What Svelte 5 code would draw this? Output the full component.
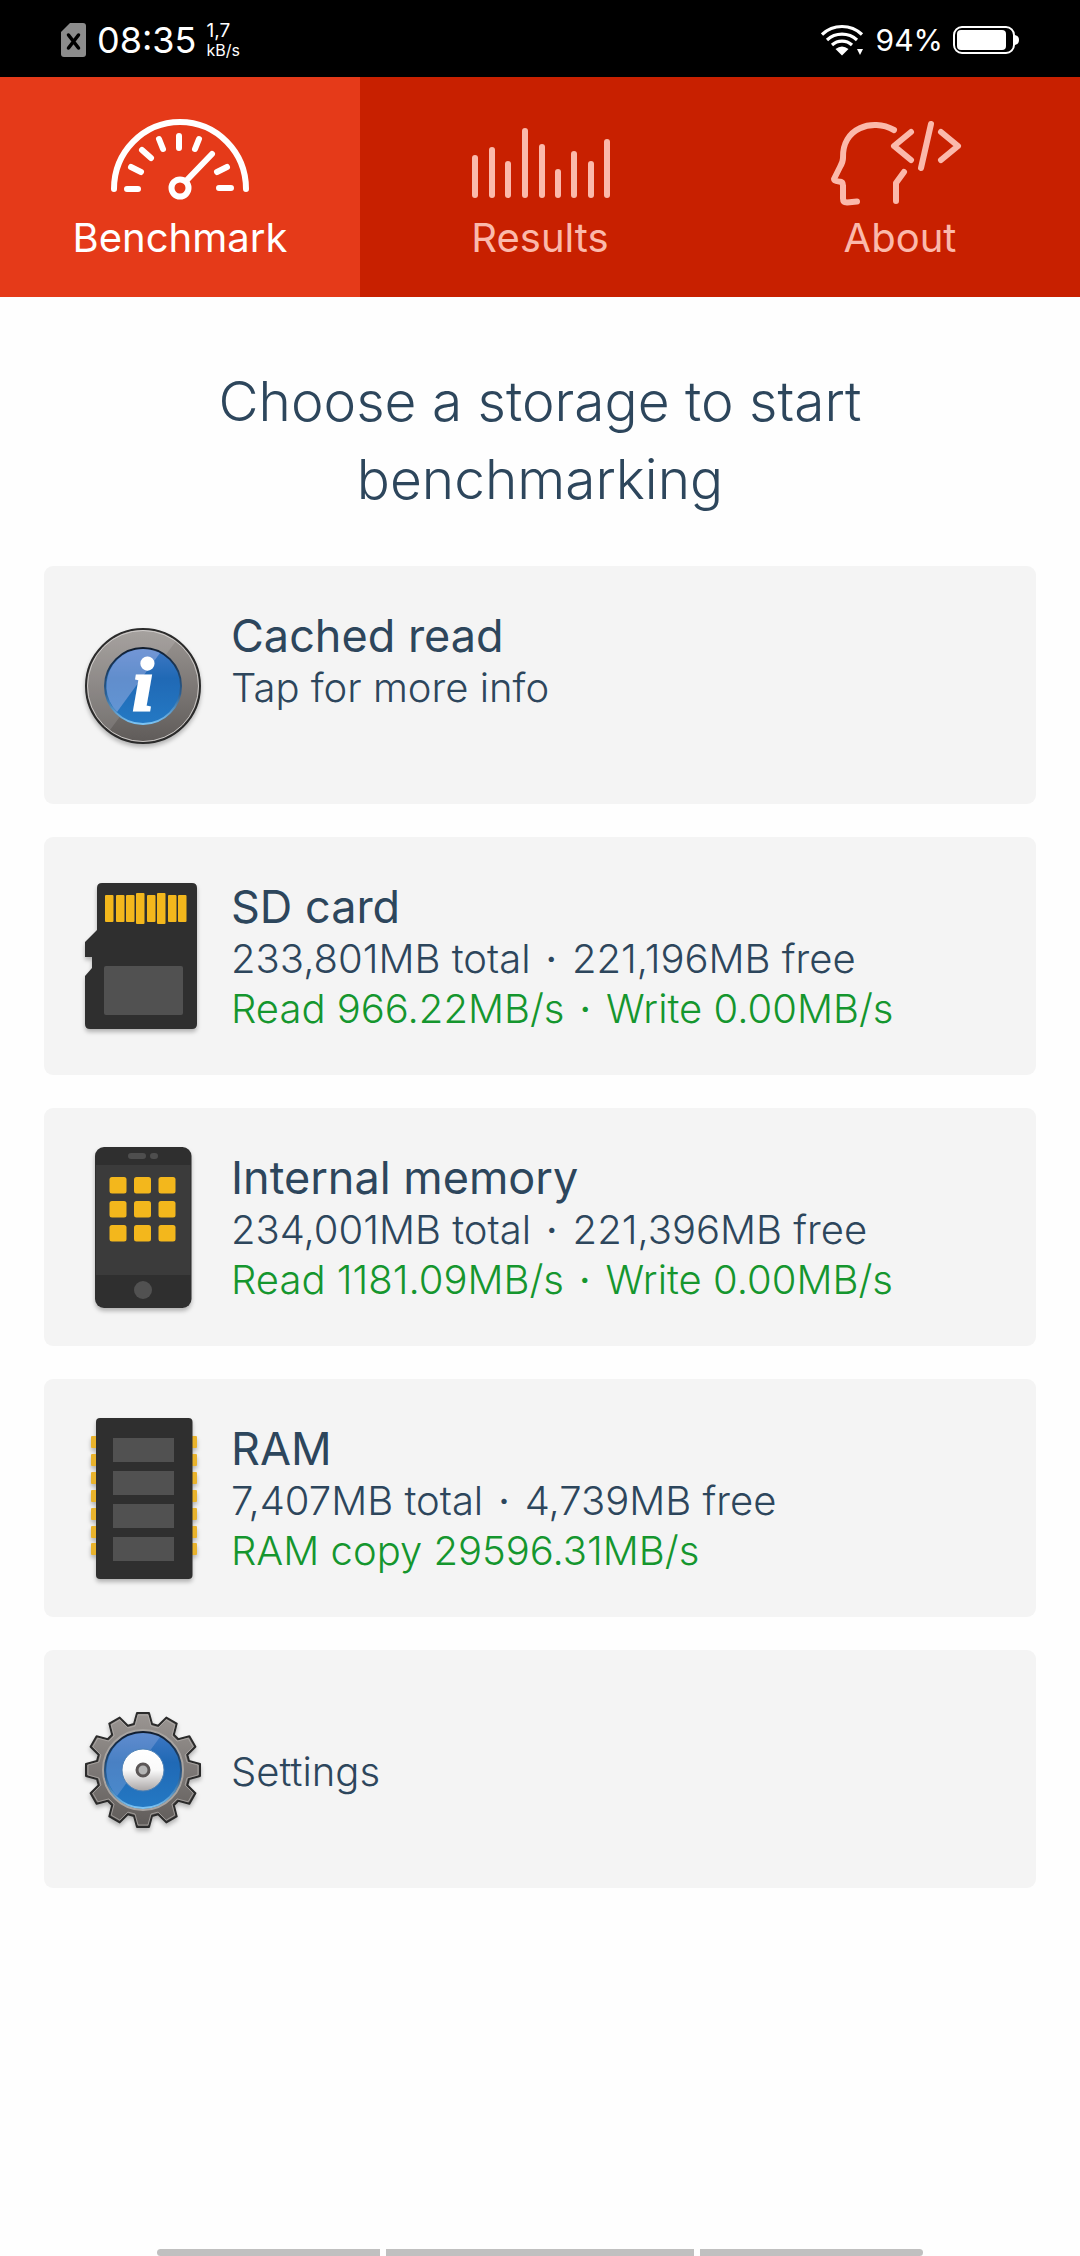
<script>
  let tab = $state('benchmark');

  const tabs = [
    { id: 'benchmark', label: 'Benchmark' },
    { id: 'results', label: 'Results' },
    { id: 'about', label: 'About' },
  ];

  const storages = [
    { icon: 'info', title: 'Cached read', usage: ['Tap for more info'], speed: [] },
    { icon: 'sd', title: 'SD card', usage: ['233,801MB total', '221,196MB free'], speed: ['Read 966.22MB/s', 'Write 0.00MB/s'] },
    { icon: 'phone', title: 'Internal memory', usage: ['234,001MB total', '221,396MB free'], speed: ['Read 1181.09MB/s', 'Write 0.00MB/s'] },
    { icon: 'ram', title: 'RAM', usage: ['7,407MB total', '4,739MB free'], speed: ['RAM copy 29596.31MB/s'] },
    { icon: 'gear', title: '', usage: ['Settings'], speed: [] },
  ];

  // x position and top of each bar in the results icon
  const bars = [[7, 44], [24, 36], [40, 50], [57, 17], [74, 33], [90, 58], [106, 40], [123, 50], [139, 28]];

  // SD card contacts: x, taller or not
  const contacts = [[31, 0], [42, 0], [52, 0], [62, 1], [73, 0], [83, 1], [94, 0], [104, 0]];

  // outline of the 12-tooth gear around 69,83
  function gearPath(tip, root, half) {
    const pts = [];
    for (let i = 0; i < 12; i++) {
      const a = (i * Math.PI) / 6;
      for (const [r, w] of [[root, -half - 3], [tip, -half], [tip, half], [root, half + 3]]) {
        const x = 69 + r * Math.sin(a) + w * Math.cos(a);
        const y = 83 - r * Math.cos(a) + w * Math.sin(a);
        pts.push(x.toFixed(1) + ' ' + y.toFixed(1));
      }
    }
    return 'M' + pts.join('L') + 'Z';
  }
  const gear = gearPath(57, 46, 6);
  const gearEdge = gearPath(55, 44, 5);
</script>

{#snippet parts(list)}
  {#each list as part, i}
    {#if i > 0}<span class="dot">·</span>{/if}<span>{part}</span>
  {/each}
{/snippet}

{#snippet tabIcon(id)}
  <svg class="tab-icon" viewBox="0 0 144 90" aria-hidden="true">
    {#if id === 'benchmark'}
      <path d="M6 75a66 67 0 0 1 132 0" />
      <path d="M19 75h11M23 53l10 5M34 36l9 8M51 25l4 10M71 22v12M91 25l-4 10M119 53l-10 5M111 74h12" />
      <path d="M104 40L78 67" />
      <circle cx="72" cy="74" r="8.5" />
    {:else if id === 'results'}
      {#each bars as [x, y]}
        <path d="M{x} {y}V81" />
      {/each}
    {:else}
      <path d="M66 16C44 4 14 14 15 44q0 4-3 9l-6 12q0 2 5 2.500q4 0 4 4v13q0 4 4 4l10-1" />
      <path d="M76 58l-8 11v18M83 18L66 32l17 14M103 10l-10 44M113 18l17 14-17 14" />
    {/if}
  </svg>
{/snippet}

{#snippet cardIcon(id)}
  <svg class="card-icon" viewBox="0 0 138 164" aria-hidden="true">
    {#if id === 'info'}
      <circle cx="69" cy="83" r="57" fill="url(#metal)" stroke="#2b2b2b" stroke-width="2" />
      <circle cx="69" cy="83" r="55.500" fill="none" stroke="#c9c6c4" stroke-width="1" />
      <path d="M102 38A55 55 0 0 0 36 127Z" fill="#fff" opacity=".12" />
      <circle cx="69" cy="83" r="38" fill="url(#blue)" stroke="url(#rim)" stroke-width="2" />
      <path d="M86 50A37 37 0 0 0 43 109Z" fill="#c3c6ef" opacity=".4" />
      <text x="69" y="107" text-anchor="middle" class="info-i">i</text>
    {:else if id === 'sd'}
      <path d="M28 9h90q5 0 5 5v136q0 5-5 5H16q-5 0-5-5V102l7-8V83h-7V68l12-12V14q0-5 5-5z" fill="#2f2f2f" />
      {#each contacts as [x, tall]}
        <rect {x} y={tall ? 19 : 21} width="8.500" height={tall ? 31 : 27} rx="1" fill="#f3b71c" />
      {/each}
      <rect x="30" y="92" width="79" height="49" rx="2" fill="#515151" />
    {:else if id === 'phone'}
      <rect x="21" y="2" width="96.500" height="161" rx="9" fill="#2f2f2f" />
      <rect x="22" y="20" width="94.500" height="110" fill="#3b3b3b" />
      <rect x="54" y="8" width="18" height="6" rx="3" fill="#4e4e4e" />
      <rect x="76" y="8" width="8" height="6" rx="3" fill="#4e4e4e" />
      {#each [32, 56, 80] as y}
        {#each [35.500, 60, 84.500] as x}
          <rect {x} {y} width="17" height="16.500" rx="2.500" fill="#f3b71c" />
        {/each}
      {/each}
      <circle cx="69" cy="145" r="9" fill="#515151" />
    {:else if id === 'ram'}
      {#each [20, 38, 56, 74, 92, 110, 127] as y}
        <rect x="17" {y} width="106" height="12" rx="1" fill="#e9b32c" />
      {/each}
      <rect x="22" y="2" width="96.500" height="161" rx="4" fill="#2f2f2f" />
      {#each [22, 55, 88, 121] as y}
        <rect x="39" {y} width="61" height="24" fill="#515151" />
      {/each}
    {:else}
      <path d={gear} fill="url(#metal)" stroke="#2b2b2b" stroke-width="2" stroke-linejoin="round" />
      <path d={gearEdge} fill="none" stroke="#b5b1ae" stroke-width="1" opacity=".7" />
      <circle cx="69" cy="83" r="40" fill="none" stroke="#a8a4a1" stroke-width="2" />
      <circle cx="69" cy="83" r="38" fill="url(#blue)" stroke="url(#rim)" stroke-width="2" />
      <path d="M86 50A37 37 0 0 0 43 109Z" fill="#c3c6ef" opacity=".25" />
      <circle cx="69" cy="83" r="21" fill="url(#disc)" stroke="#4a7fb5" stroke-width="1" />
      <circle cx="69" cy="83" r="6" fill="#b5b5b5" stroke="#5b5656" stroke-width="3" />
    {/if}
  </svg>
{/snippet}

<div class="screen">
  <!-- shared gradients for the glossy icons -->
  <svg class="defs" aria-hidden="true">
    <defs>
      <linearGradient id="metal" x1="0" y1="0" x2="0" y2="1">
        <stop offset="0" stop-color="#9b9693" />
        <stop offset="1" stop-color="#5f5b59" />
      </linearGradient>
      <linearGradient id="blue" x1="0" y1="0" x2="0" y2="1">
        <stop offset="0" stop-color="#3f78c4" />
        <stop offset=".4" stop-color="#2069b5" />
        <stop offset="1" stop-color="#2479c4" />
      </linearGradient>
      <linearGradient id="rim" x1="0" y1="0" x2="0" y2="1">
        <stop offset="0" stop-color="#101c2e" />
        <stop offset=".6" stop-color="#2c5f92" />
        <stop offset="1" stop-color="#7cc4f4" />
      </linearGradient>
      <linearGradient id="disc" x1="0" y1="0" x2="0" y2="1">
        <stop offset="0" stop-color="#ffffff" />
        <stop offset=".5" stop-color="#fafafa" />
        <stop offset="1" stop-color="#aaa6a6" />
      </linearGradient>
    </defs>
  </svg>

  <header class="status">
    <svg class="sim" viewBox="0 0 25 34" aria-hidden="true">
      <path d="M9 0h13q3 0 3 3v28q0 3-3 3H3q-3 0-3-3V9z" fill="#8c8c8c" />
      <path d="M7.500 12l10 13M17.500 12l-10 13" stroke="#000" stroke-width="3.500" stroke-linecap="round" />
    </svg>
    <span class="clock">08:35</span>
    <span class="net"><span>1,7</span><small>kB/s</small></span>
    <span class="spacer"></span>
    <svg class="wifi" viewBox="0 0 43 32" aria-hidden="true">
      <g fill="none" stroke="#fff" stroke-width="3.200">
        <path d="M1 10.500a29 29 0 0 1 40 0" />
        <path d="M6 16a22 22 0 0 1 30 0" />
        <path d="M11 21a15 15 0 0 1 20 0" />
      </g>
      <path d="M14.500 25q6.500-5 13 0L21 31.500z" fill="#fff" />
      <path d="M36 25h6l-3 6z" fill="#fff" />
    </svg>
    <span class="percent">94%</span>
    <svg class="battery" viewBox="0 0 66 28" aria-hidden="true">
      <rect x="1" y="1" width="60" height="26" rx="8" fill="none" stroke="#fff" stroke-width="2" />
      <rect x="4" y="4" width="49" height="20" rx="4" fill="#fff" />
      <path d="M62 9q4 1 4 5t-4 5z" fill="#fff" />
    </svg>
  </header>

  <nav class="tabs">
    {#each tabs as t}
      <button class="tab" class:active={tab === t.id} onclick={() => (tab = t.id)}>
        {@render tabIcon(t.id)}
        <span>{t.label}</span>
      </button>
    {/each}
  </nav>

  <main>
    <h1>Choose a storage to start benchmarking</h1>
    <div class="cards">
      {#each storages as s}
        <button class="card">
          {@render cardIcon(s.icon)}
          <span class="info" class:single={!s.title}>
            {#if s.title}<span class="title">{s.title}</span>{/if}
            <span class="line">{@render parts(s.usage)}</span>
            {#if s.speed.length}
              <span class="line speed">{@render parts(s.speed)}</span>
            {/if}
          </span>
        </button>
      {/each}
    </div>
  </main>

  <footer class="gestures">
    <span></span>
    <span class="wide"></span>
    <span></span>
  </footer>
</div>

<style>
  :global(body) { margin: 0; background: #fefefe; }
  .screen { min-height: 100vh; display: flex; flex-direction: column; font-family: Inter, Roboto, sans-serif; color: #2d465c; }
  .defs { position: absolute; width: 0; height: 0; }
  button { font: inherit; color: inherit; border: 0; margin: 0; cursor: pointer; }

  .status { box-sizing: border-box; height: 77px; padding: 2px 61px 0; background: #000; color: #fff; display: flex; align-items: center; }
  .sim { width: 25px; height: 34px; margin-right: 11px; }
  .clock { font-size: 36px; line-height: 44px; }
  .net { display: flex; flex-direction: column; margin-left: 10px; font-size: 19px; line-height: 20px; }
  .net small { font-size: 16px; line-height: 18px; }
  .spacer { flex: 1; }
  .wifi { width: 43px; height: 32px; margin-right: 12px; }
  .percent { font-size: 30px; line-height: 36px; margin-right: 10px; }
  .battery { width: 66px; height: 28px; }

  .tabs { display: grid; grid-template-columns: repeat(3, 1fr); background: #c82000; }
  .tab { display: flex; flex-direction: column; align-items: center; gap: 10px; padding: 37px 0 35px; background: none; color: #fbb9ab; font-size: 40px; line-height: 48px; }
  .tab.active { background: #e53a19; color: #fff; }
  .tab-icon { width: 144px; height: 90px; overflow: visible; fill: none; stroke: currentColor; stroke-width: 6; stroke-linecap: round; stroke-linejoin: round; }

  main { padding: 65px 44px 48px; }
  h1 { margin: 0 0 48px; padding: 0 100px; text-align: center; font-size: 55px; line-height: 78px; font-weight: 300; }
  .cards { display: flex; flex-direction: column; gap: 33px; }
  .card { display: flex; align-items: center; gap: 19px; padding: 37px 30px; border-radius: 9px; background: #f4f4f4; text-align: left; }
  .card-icon { flex: none; width: 138px; height: 164px; filter: drop-shadow(0 3px 2px #0004); }
  .info-i { font: italic bold 74px "Liberation Serif", serif; fill: #fff; stroke: #fff; stroke-width: 3; }
  .info { display: flex; flex-direction: column; min-height: 154px; padding-top: 2px; font-size: 40px; line-height: 50px; font-weight: 300; }
  .info.single { justify-content: center; padding-top: 6px; }
  .title { font-size: 45px; line-height: 54px; font-weight: 400; }
  .speed { color: #15962e; }
  .dot { margin: 0 15px; font-weight: 400; }

  .gestures { margin-top: auto; width: 71%; align-self: center; display: flex; gap: 6px; }
  .gestures span { flex: 223; height: 7px; background: #c0c0c0; }
  .gestures .wide { flex: 309; }
  .gestures span:first-child { border-top-left-radius: 4px; border-bottom-left-radius: 4px; }
  .gestures span:last-child { border-top-right-radius: 4px; border-bottom-right-radius: 4px; }
</style>
